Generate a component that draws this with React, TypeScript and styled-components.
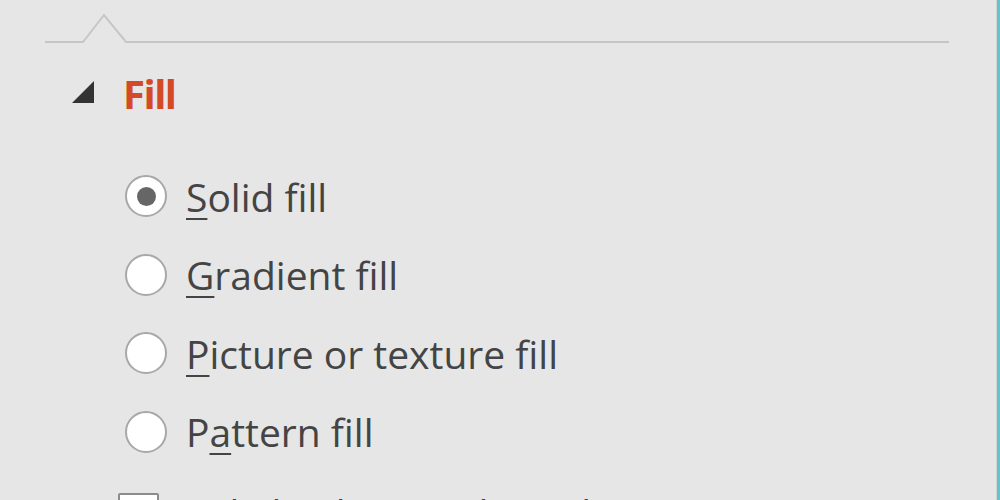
import styled, { createGlobalStyle } from "styled-components";

const GlobalStyle = createGlobalStyle`
  html, body {
    margin: 0;
    padding: 0;
    background: #e6e6e6;
    overflow: hidden;
  }
`;

const Pane = styled.div`
  box-sizing: border-box;
  width: 1000px;
  height: 500px;
  overflow: hidden;
  background: #e6e6e6;
  border-right: 3px solid #63c3d0;
  box-shadow: inset -1px 0 0 #d2d2d2;
  padding-left: 45px;
  font-family: "Open Sans", "Noto Sans", sans-serif;
  color: #444;
`;

const TabRule = styled.svg`
  display: block;
  width: 904px;
  height: 44px;
`;

const SectionHeader = styled.div`
  display: flex;
  align-items: center;
  gap: 28px;
  margin: 36px 0 0 27px;
  height: 24px;
`;

const Caret = styled.svg`
  width: 23px;
  height: 23px;
  flex-shrink: 0;
`;

const SectionTitle = styled.span`
  font-family: "Open Sans", "Noto Sans", sans-serif;
  font-weight: 700;
  font-size: 40px;
  letter-spacing: -1.5px;
  color: #d34a24;
  line-height: 1;
  padding-top: 3px;
`;

const OptionList = styled.div`
  display: flex;
  flex-direction: column;
  margin: 53px 0 0 80px;
`;

const OptionRow = styled.label`
  display: flex;
  align-items: center;
  gap: 19px;
  height: 78.5px;
`;

const Radio = styled.span<{ $checked?: boolean }>`
  box-sizing: border-box;
  width: 42px;
  height: 42px;
  border-radius: 50%;
  border: 2px solid #a8a8a8;
  background: #fff;
  display: flex;
  align-items: center;
  justify-content: center;
  flex-shrink: 0;

  &::after {
    content: "";
    display: ${(p) => (p.$checked ? "block" : "none")};
    width: 19px;
    height: 19px;
    border-radius: 50%;
    background: #666;
  }
`;

const CheckRow = styled.label`
  display: flex;
  align-items: flex-start;
  gap: 18px;
  margin-left: -7px;
  padding-top: 22px;
`;

const CheckBox = styled.span`
  box-sizing: border-box;
  width: 41px;
  height: 41px;
  border: 2px solid #8c8c8c;
  border-radius: 2px;
  background: #fff;
  flex-shrink: 0;
`;

const Label = styled.span`
  font-size: 39px;
  line-height: 1;
  color: #444;
  white-space: nowrap;
`;

const AccessKey = styled.span`
  text-decoration: underline;
  text-decoration-thickness: 2px;
  text-underline-offset: 6px;
`;

const options = [
  { key: "S", rest: "olid fill", checked: true },
  { key: "G", rest: "radient fill" },
  { key: "P", rest: "icture or texture fill" },
];

export default function App() {
  return (
    <>
      <GlobalStyle />
      <Pane>
        <TabRule viewBox="0 0 904 44">
          <path
            d="M0 42 H38 L59 15 L81 42 H904"
            fill="none"
            stroke="#c6c6c6"
            strokeWidth="2"
          />
        </TabRule>

        <SectionHeader>
          <Caret viewBox="0 0 23 23">
            <path d="M0 22 L22 22 L22 0 Z" fill="#333" />
          </Caret>
          <SectionTitle>Fill</SectionTitle>
        </SectionHeader>

        <OptionList>
          {options.map((o) => (
            <OptionRow key={o.key}>
              <Radio $checked={o.checked} />
              <Label>
                <AccessKey>{o.key}</AccessKey>
                {o.rest}
              </Label>
            </OptionRow>
          ))}
          <OptionRow>
            <Radio />
            <Label>
              P<AccessKey>a</AccessKey>ttern fill
            </Label>
          </OptionRow>
          <CheckRow>
            <CheckBox />
            <Label>
              <AccessKey>H</AccessKey>ide background graphics
            </Label>
          </CheckRow>
        </OptionList>
      </Pane>
    </>
  );
}
